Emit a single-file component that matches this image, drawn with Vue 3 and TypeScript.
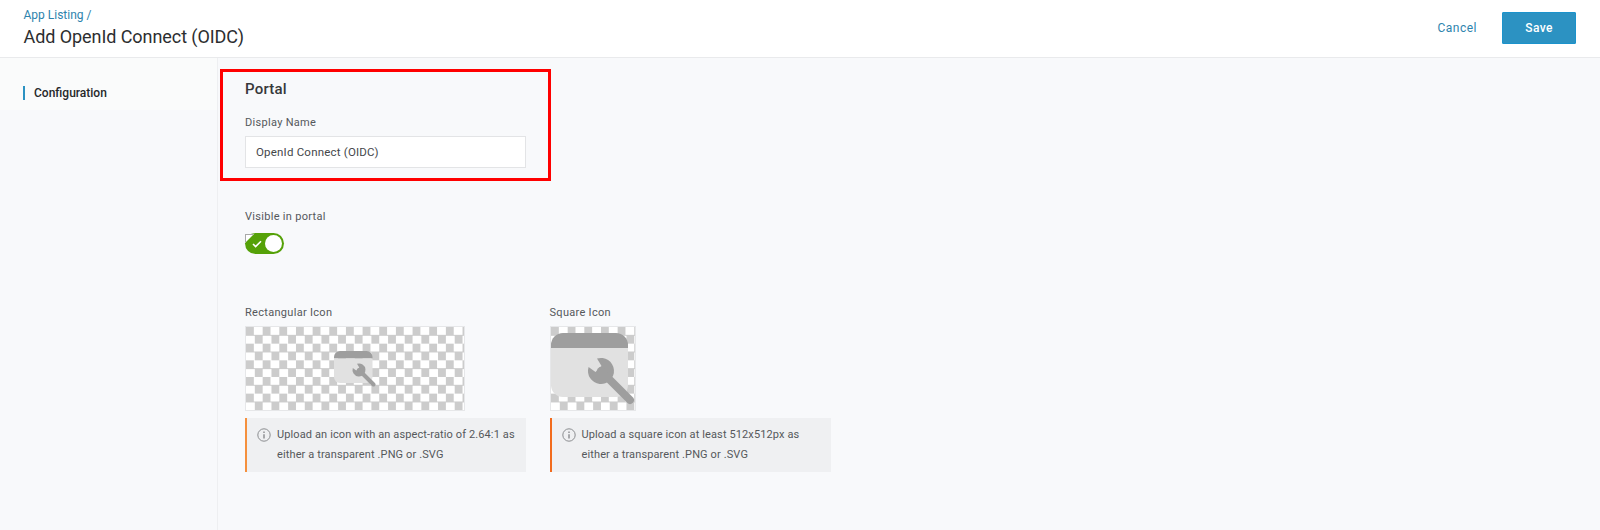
<script setup lang="ts">
// Add-app form: header with actions, side nav, portal settings and icon uploads.
interface Upload {
  label: string
  hint: string[]
  kind: 'rect' | 'square'
  accent: string
}

const uploads: Upload[] = [
  {
    label: 'Rectangular Icon',
    hint: ['Upload an icon with an aspect-ratio of 2.64:1 as', 'either a transparent .PNG or .SVG'],
    kind: 'rect',
    accent: '#f5903d',
  },
  {
    label: 'Square Icon',
    hint: ['Upload a square icon at least 512x512px as', 'either a transparent .PNG or .SVG'],
    kind: 'square',
    accent: '#f26b1d',
  },
]
</script>

<template>
  <div class="page">
    <header class="top">
      <div class="titles">
        <a class="crumb">App Listing /</a>
        <h1>Add OpenId Connect (OIDC)</h1>
      </div>
      <div class="actions">
        <button class="cancel">Cancel</button>
        <button class="save">Save</button>
      </div>
    </header>

    <div class="body">
      <nav class="side">
        <div class="nav-item"><span>Configuration</span></div>
      </nav>

      <main class="main">
        <section class="portal">
          <h2>Portal</h2>
          <label class="lbl">Display Name</label>
          <div class="input">OpenId Connect (OIDC)</div>
        </section>

        <div class="visible">
          <label class="lbl">Visible in portal</label>
          <div class="toggle">
            <svg class="tick" width="10" height="8" viewBox="0 0 10 8">
              <path d="M1 4l2.6 2.6L9 1.2" fill="none" stroke="#fff" stroke-width="1.6" />
            </svg>
            <i class="knob"></i>
          </div>
        </div>

        <div class="uploads">
          <div v-for="u in uploads" :key="u.kind" class="upload">
            <label class="lbl">{{ u.label }}</label>
            <div class="checker" :class="u.kind">
              <svg class="glyph" viewBox="0 0 84 74">
                <path d="M0 15V12A12 12 0 0 1 12 0H65A12 12 0 0 1 77 12V15Z" fill="#9e9e9e" />
                <path d="M0 15H77V52A12 12 0 0 1 65 64H12A12 12 0 0 1 0 52Z" fill="#e1e1e1" />
                <path d="M46 25.6L50.5 33L44.5 39L37.6 34A13 13 0 1 0 46 25.6Z" fill="#9e9e9e" />
                <path d="M50 38L79 67" stroke="#9e9e9e" stroke-width="8" stroke-linecap="round" />
              </svg>
            </div>
            <div class="hint" :style="{ borderLeftColor: u.accent }">
              <svg class="info" width="14" height="14" viewBox="0 0 14 14">
                <circle cx="7" cy="7" r="6.2" fill="none" stroke="#8b8d90" stroke-width="1" />
                <path d="M7 6.2V10.4M7 3.6V4.9" stroke="#77797c" stroke-width="1.2" />
              </svg>
              <p><span v-for="l in u.hint" :key="l">{{ l }}</span></p>
            </div>
          </div>
        </div>
      </main>
    </div>
  </div>
</template>

<style>
html, body { margin: 0; background: #f8f9fb; }
</style>

<style scoped>
.page {
  width: 1600px;
  height: 530px;
  overflow: hidden;
  display: flex;
  flex-direction: column;
  font-family: Roboto, "Liberation Sans", sans-serif;
  color: #2c2e30;
  background: #f8f9fb;
}
.top {
  height: 58px;
  box-sizing: border-box;
  flex: none;
  display: flex;
  justify-content: space-between;
  align-items: flex-start;
  padding: 7px 24px 0 23.5px;
  background: #fff;
  border-bottom: 1px solid #e9eaec;
}
.crumb {
  display: block;
  font-size: 12px;
  line-height: 16px;
  color: #2d83ad;
}
h1 {
  margin: 2px 0 0;
  font-size: 18px;
  line-height: 24px;
  font-weight: 400;
  letter-spacing: -0.07px;
  color: #2c2e30;
}
.actions {
  display: flex;
  align-items: center;
  gap: 25px;
  padding-top: 5px;
}
.cancel {
  border: 0;
  padding: 0;
  background: none;
  font: 400 12px Roboto, sans-serif;
  letter-spacing: 0.5px;
  color: #2d83ad;
}
.save {
  width: 74px;
  height: 32px;
  border: 1px solid #1b93cc;
  border-radius: 1px;
  background: #2c92c2;
  color: #fff;
  font: 500 12px Roboto, sans-serif;
  letter-spacing: 0.4px;
}
.body {
  flex: 1;
  display: flex;
}
.side {
  width: 218px;
  flex: none;
  box-sizing: border-box;
  border-right: 1px solid #eeeff1;
}
.nav-item {
  height: 52px;
  box-sizing: border-box;
  padding: 28px 0 0 23px;
  background: #fafbfb;
}
.nav-item span {
  display: block;
  height: 14px;
  padding-left: 9px;
  border-left: 2px solid #2c92c2;
  font-size: 12px;
  line-height: 14px;
  font-weight: 500;
  color: #26282a;
}
.main {
  flex: 1;
  padding: 11px 0 0 2px;
}
.portal {
  width: 331px;
  height: 112px;
  box-sizing: border-box;
  border: 3px solid #f00;
  padding: 7px 22px 0;
}
h2 {
  margin: 0;
  font-size: 15px;
  line-height: 20px;
  font-weight: 500;
  letter-spacing: 0.2px;
  color: #36383a;
}
.lbl {
  display: block;
  font-size: 11px;
  line-height: 16px;
  letter-spacing: 0.3px;
  color: #55585b;
}
.portal .lbl {
  margin-top: 16px;
}
.input {
  width: 281px;
  height: 32px;
  margin-top: 5px;
  box-sizing: border-box;
  padding-left: 10px;
  border: 1px solid #e3e4e6;
  background: #fff;
  font-size: 11.5px;
  line-height: 30px;
  letter-spacing: 0.2px;
  color: #44474a;
}
.visible {
  margin: 28px 0 0 25px;
}
.toggle {
  position: relative;
  width: 39px;
  height: 21px;
  margin-top: 8px;
  box-sizing: border-box;
  border-radius: 11px;
  background: #55a108;
}
.toggle::before {
  content: '';
  position: absolute;
  left: 0;
  top: 1px;
  width: 8px;
  height: 8px;
  border: solid #a9a9a9;
  border-width: 1px 0 0 1px;
  background: #fff;
  clip-path: polygon(0 0, 100% 0, 0 100%);
}
.tick {
  position: absolute;
  left: 7px;
  top: 7px;
}
.knob {
  position: absolute;
  right: 2px;
  top: 2px;
  width: 17px;
  height: 17px;
  border-radius: 50%;
  background: #fff;
}
.uploads {
  display: flex;
  gap: 23.5px;
  margin: 51px 0 0 25px;
}
.upload {
  width: 281px;
}
.checker {
  margin-top: 5px;
  box-sizing: border-box;
  height: 85px;
  border: 1px solid #e6e7e9;
  background: repeating-conic-gradient(#fff 0 25%, #ccc 0 50%) 0 0 / 16.67px 16.67px;
  overflow: hidden;
  display: flex;
}
.checker.rect {
  width: 220px;
  padding: 24px 0 0 88px;
}
.checker.rect .glyph {
  width: 42px;
  height: 37px;
}
.checker.square {
  width: 86px;
  padding: 6px 0 0 0;
}
.checker.square .glyph {
  width: 84px;
  height: 74px;
  flex: none;
}
.hint {
  display: flex;
  gap: 6px;
  height: 54px;
  margin-top: 7px;
  box-sizing: border-box;
  padding: 7px 10px 0 10px;
  border-left: 2px solid;
  background: #eff0f2;
}
.info {
  flex: none;
  margin-top: 3px;
}
.hint p {
  margin: 0;
  font-size: 11px;
  line-height: 20px;
  letter-spacing: 0.12px;
  color: #55585b;
}
.hint p span {
  display: block;
  white-space: nowrap;
}
</style>
